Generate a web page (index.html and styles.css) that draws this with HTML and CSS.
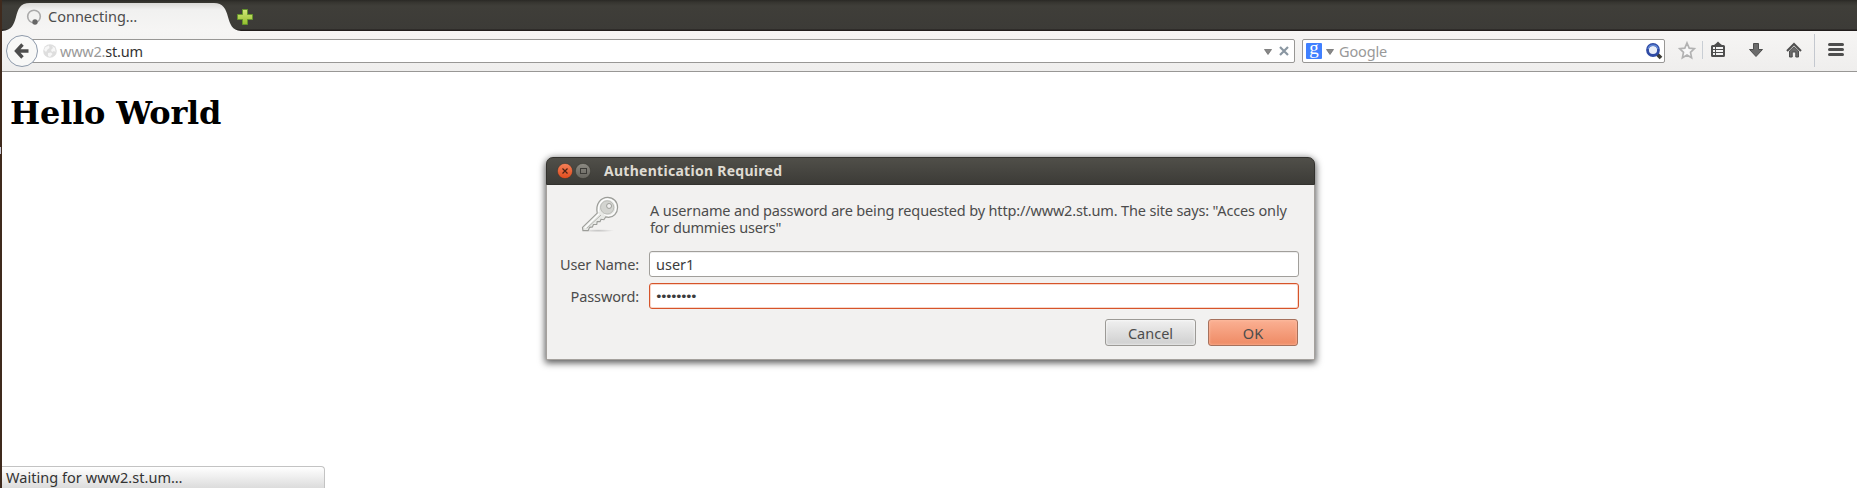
FILE: index.html
```html
<!DOCTYPE html>
<html lang="en">
<head>
<meta charset="utf-8">
<title>Connecting…</title>
<link rel="stylesheet" href="styles.css">
</head>
<body>
<div class="desktop">
<div class="launcher-mark"></div>
<div class="browser">
  <header class="tabs">
    <div class="tab">
      <svg class="tab-shape" width="240" height="31" viewBox="0 0 240 31">
        <defs><linearGradient id="tabfill" x1="0" y1="0" x2="0" y2="1"><stop offset="0" stop-color="#d9d8d6"/><stop offset=".25" stop-color="#f1f1f0"/><stop offset="1" stop-color="#f6f5f4"/></linearGradient></defs>
        <path d="M0 31C10 30.500 12 24 14 17C16 9 18 3 28 3H212C221 3 224 9 226 17C228 24 230 30.500 239 31Z" fill="url(#tabfill)"/>
      </svg>
      <svg class="spinner" width="16" height="16" viewBox="0 0 16 16"><circle cx="8" cy="7.500" r="6.300" fill="none" stroke="#aaa" stroke-width="1.600"/><circle cx="9" cy="13" r="2.700" fill="#666"/></svg>
      <span class="tab-title">Connecting…</span>
    </div>
    <svg class="newtab" width="16" height="16" viewBox="0 0 16 16"><defs><linearGradient id="plus" x1="0" y1="0" x2="0" y2="1"><stop offset="0" stop-color="#d3e77a"/><stop offset="1" stop-color="#94bd2c"/></linearGradient></defs><path d="M5.500 .5h5v5h5v5h-5v5h-5v-5h-5v-5h5z" fill="url(#plus)" stroke="#65942c"/></svg>
  </header>
  <nav class="toolbar">
    <div class="back"><svg width="16" height="16" viewBox="0 0 16 16"><path d="M8.500 1.500L2.500 8L8.500 14.500M3 8H14.500" fill="none" stroke="#4d4d4d" stroke-width="3.400"/></svg></div>
    <div class="urlbar">
      <svg class="globe" width="14" height="14" viewBox="0 0 14 14"><circle cx="7" cy="7" r="6.800" fill="#dedede"/><path d="M2.500 3L6 1.500L6.500 4L4.500 5.500L3 8L1 6ZM9 2L12 4L12.500 8L11 7L9 8L8 6L10 4ZM5 9L8 8.500L9.500 10L7 13L5 12Z" fill="#f7f7f7"/></svg>
      <span class="url"><span class="dim">www2.</span>st.um</span>
      <svg class="caret" width="8" height="6" viewBox="0 0 8 6"><path d="M.5 .5h7L4 5.500z" fill="#888" stroke="#666" stroke-width=".7"/></svg>
      <svg class="stop" width="10" height="10" viewBox="0 0 10 10"><path d="M1 1L9 9M9 1L1 9" stroke="#8996a1" stroke-width="2.200"/></svg>
    </div>
    <div class="search">
      <div class="google">g</div>
      <svg class="caret2" width="8" height="6" viewBox="0 0 8 6"><path d="M.5 .5h7L4 5.500z" fill="#888" stroke="#666" stroke-width=".7"/></svg>
      <span class="placeholder">Google</span>
      <svg class="lens" width="18" height="18" viewBox="0 0 18 18"><path d="M11 11L16 16" stroke="#3b3b35" stroke-width="3.800"/><circle cx="8" cy="8" r="5.500" fill="#e9eef8" stroke="#2f4ba5" stroke-width="2.800"/><path d="M3 7A5.200 5.200 0 0 1 13 7" fill="none" stroke="#6288d4" stroke-width="1.300"/></svg>
    </div>
    <svg class="tools" width="185" height="36" viewBox="0 0 185 36">
      <path d="M15 10L17.200 15.100L22.300 15.700L18.500 19.300L19.600 24.700L15 22L10.400 24.700L11.500 19.300L7.700 15.700L12.800 15.100Z" fill="#f8f8f8" stroke="#b2b2b2" stroke-width="1.700"/>
      <path d="M30.500 8V26" stroke="#c9ced4"/>
      <path d="M39 13.500Q39 12 40.500 12H42L44 10.500L46 8.500L48 10.500L50 12H51.500Q53 12 53 13.500V22.500Q53 24 51.500 24H40.500Q39 24 39 22.500Z" fill="#4e4e4e"/>
      <path d="M41 14h2v2h-2zM44 14h7v2h-7zM41 17h2v2h-2zM44 17h7v2h-7zM41 20h2v2h-2zM44 20h7v2h-7z" fill="#f4f4f4"/>
      <path d="M81.500 10.500H86.500V16.500H90.500L84 23.500L77.500 16.500H81.500Z" fill="#6b6b6b" stroke="#4e4e4e"/>
      <path d="M115 18L122 11L129 18" fill="none" stroke="#4e4e4e" stroke-width="2"/>
      <path d="M117.500 18L122 13.800L126.500 18V24H123.800V19H120.200V24H117.500Z" fill="#6b6b6b" stroke="#4e4e4e"/>
      <path d="M142.500 1V34" stroke="#c4c8cf"/>
      <path d="M157.500 11.500H170.500M157.500 16.500H170.500M157.500 21.500H170.500" stroke="#4e4e4e" stroke-width="3" stroke-linecap="round"/>
    </svg>
  </nav>
  <main class="page">
    <h1>Hello World</h1>
    <div class="status">Waiting for www2.st.um…</div>
  </main>
</div>
<section class="dialog">
  <div class="titlebar">
    <svg width="34" height="16" viewBox="0 0 34 16"><defs><linearGradient id="cl" x1="0" y1="0" x2="0" y2="1"><stop offset="0" stop-color="#f58159"/><stop offset="1" stop-color="#df4b1c"/></linearGradient><linearGradient id="mx" x1="0" y1="0" x2="0" y2="1"><stop offset="0" stop-color="#8d8b83"/><stop offset="1" stop-color="#66645d"/></linearGradient></defs><circle cx="8" cy="8" r="7.600" fill="url(#cl)" stroke="#35342f" stroke-width=".5"/><path d="M5.500 5.500L10.500 10.500M10.500 5.500L5.500 10.500" stroke="#4c2113" stroke-width="1.200"/><circle cx="26" cy="8" r="7.600" fill="url(#mx)" stroke="#35342f" stroke-width=".5"/><rect x="23.500" y="5.500" width="6" height="5" fill="none" stroke="#3c3b37"/></svg>
    <span class="dialog-title">Authentication Required</span>
  </div>
  <div class="dialog-body">
    <svg class="key" width="40" height="38" viewBox="0 0 42 40">
      <defs><radialGradient id="sh"><stop offset="0" stop-color="#aaa" stop-opacity=".65"/><stop offset="1" stop-color="#aaa" stop-opacity="0"/></radialGradient></defs>
      <ellipse cx="18" cy="36.500" rx="17" ry="1.600" fill="url(#sh)"/>
      <path d="M17 18C15 8 21 1.500 28 1.500C34 1.500 38.500 6 38.500 12C38.500 18 34 22.500 29 22.500L26 22L24 25L21 24.500L20 27L17 27L16.500 30L13 30L12 32.500L9 33L7.500 36.500H2L1.500 33Z" fill="#e8e9e6" stroke="#9c9d99" stroke-width="1.200"/>
      <path d="M18.800 17C17 9 22 3.300 28 3.300C33 3.300 36.700 7 36.700 12C36.700 17 33 20.700 28.500 20.700L24.500 19.500M19 18.500L4 33.500" fill="none" stroke="#fff" stroke-width="1.200"/>
      <circle cx="27.500" cy="12" r="7" fill="#d3d4d0" stroke="#b7b8b4"/><circle cx="29.500" cy="10.500" r="2.600" fill="#f2f1f0" stroke="#999a96"/><path d="M21 20L6 34" stroke="#b0b1ad"/>
    </svg>
    <p class="message">A username and password are being requested by http://www2.st.um. The site says: "Acces only<br>for dummies users"</p>
    <div class="label">User Name:</div><div class="field">user1</div>
    <div class="label">Password:</div><div class="field focus"><span class="dots">••••••••</span></div>
    <div class="buttons"><button class="cancel">Cancel</button><button class="ok">OK</button></div>
  </div>
</section>
</div>
</body>
</html>
```
FILE: styles.css
```css
* { box-sizing: border-box; }
body { margin: 0; width: 1857px; height: 488px; overflow: hidden; font: 14.500px "Noto Sans", sans-serif; color: #4c4c4c; }
.desktop { position: relative; height: 488px; padding-left: 2px; background: #3f2a1d; }
.launcher-mark { position: absolute; left: 0; top: 147px; width: 1px; height: 7px; background: #c9c9d6; }
.browser { display: flex; flex-direction: column; height: 488px; background: #fff; }
.tabs { display: flex; height: 31px; background: linear-gradient(#2a2925 0, #35342f 2px, #3f3e39 6px, #3c3b37 29px, #211d1c 30px); }
.tab { position: relative; display: flex; align-items: center; width: 229px; padding: 3px 0 0 24px; }
.tab-shape { position: absolute; left: 0; top: 0; }
.spinner { position: relative; flex: none; }
.tab-title { position: relative; margin: -2px 0 0 6px; line-height: 20px; white-space: nowrap; }
.newtab { margin: 9px 0 0 6px; }
.toolbar { display: flex; align-items: center; height: 41px; padding: 0 0 1px 4px; background: linear-gradient(#f6f5f4, #efeeed); border-bottom: 1px solid #989795; }
.back { position: relative; z-index: 1; display: flex; align-items: center; justify-content: center; flex: none; width: 32px; height: 32px; border: 1px solid #8e9aab; border-radius: 50%; background: #f8f8f7; }
.urlbar { display: flex; align-items: center; width: 1266px; height: 24px; margin-left: -9px; padding: 0 5px 0 13px; border: 1px solid #989795; border-radius: 0 2px 2px 0; background: #fff; }
.url { flex: 1; margin-left: 3px; color: #333; letter-spacing: -.22px; }
.dim { color: #999; }
.caret { margin-top: 2px; }
.stop { margin-left: 7px; }
.search { display: flex; align-items: center; width: 363px; height: 24px; margin-left: 7px; padding: 0 1px 0 3px; border: 1px solid #989795; border-radius: 2px; background: #fff; }
.google { width: 16px; height: 16px; border-radius: 1px; background: #4080ff; color: #fff; font: 19px/9px "Liberation Serif", serif; text-align: center; }
.caret2 { margin: 2px 0 0 4px; }
.placeholder { flex: 1; margin-left: 5px; color: #999; letter-spacing: -.15px; }
.tools { margin-left: 7px; flex: none; }
.page { display: flex; flex-direction: column; justify-content: space-between; flex: 1; }
h1 { margin: 23px 0 0 8px; font: bold 32px/37px "DejaVu Serif", serif; letter-spacing: -.2px; color: #000; }
.status { width: 323px; height: 22px; padding-left: 4px; border: solid #c3c3c3; border-width: 1px 1px 0 0; border-radius: 0 4px 0 0; background: linear-gradient(#fff, #dcdcdc); color: #333; line-height: 20px; letter-spacing: .04px; }
.dialog { position: absolute; left: 546px; top: 157px; width: 769px; height: 203px; border: 1px solid #a5a19d; border-top: 0; border-radius: 8px 8px 0 0; background: #f2f1f0; box-shadow: 0 2px 7px 1px rgba(0,0,0,.65); }
.titlebar { display: flex; align-items: center; height: 28px; margin: 0 -1px; padding-left: 10px; border-radius: 7px 7px 0 0; background: linear-gradient(#504f49, #3c3b37); border: 1px solid #33322e; }
.dialog-title { margin: -2px 0 0 13px; color: #dfdbd2; font-weight: bold; font-size: 14px; letter-spacing: .28px; }
.dialog-body { display: grid; grid-template-columns: 78px 650px; grid-template-rows: 56px 26px 26px 31px; row-gap: 6px; column-gap: 9px; padding: 4px 0 0 15px; }
.key { margin: 7px 0 0 19px; }
.message { margin: 13px 0 0 1px; line-height: 17px; white-space: nowrap; letter-spacing: -.16px; }
.label { align-self: center; text-align: right; white-space: nowrap; margin: 0 1px 0 -2px; letter-spacing: -.12px; }
.field { display: flex; align-items: center; padding-left: 6px; border: 1px solid #a19f9b; border-radius: 3px; background: #fff; box-shadow: inset 0 1px #eee; color: #3c3c3c; }
.focus { padding-left: 5px; border-color: #d6542a; box-shadow: inset 0 0 0 1px #f9d7c9; }
.dots { font: 13px "DejaVu Sans", sans-serif; letter-spacing: -2.670px; }
.buttons { grid-column: 2; display: flex; justify-content: flex-end; gap: 12px; padding: 4px 1px 0 0; }
button { width: 91px; height: 27px; padding: 0; border: 1px solid #9c9a96; border-radius: 3px; color: #4c4c4c; font: 14.500px "Noto Sans", sans-serif; }
.cancel { background: linear-gradient(#f0f0f0, #cfcfcf); box-shadow: inset 0 0 3px #fff; }
.ok { width: 90px; background: linear-gradient(#fbb093, #ee8a64); border-color: #a6715d; box-shadow: inset 0 0 3px #ffc0a6; }
```
